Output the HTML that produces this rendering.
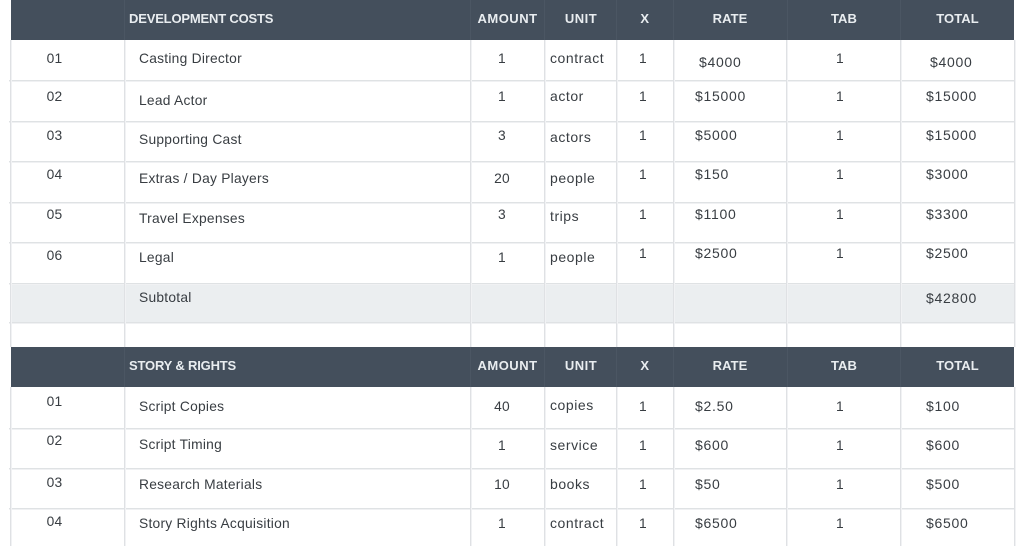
<!DOCTYPE html>
<html>
<head>
<meta charset="utf-8">
<style>
html,body{margin:0;padding:0;background:#fff}
#p{position:relative;width:1024px;height:546px;overflow:hidden;background:#fff;font-family:"Liberation Sans",sans-serif;color:#383d42;font-size:13.8px;letter-spacing:.25px}
#p div{position:absolute}
.b{background:#444f5c}
.s{background:#ebeef0}
.h{left:9px;width:1006px;height:1px;background:#dfe2e4;box-shadow:0 1px 0 #f0f1f3}
.v{width:1px;background:#dfe1e4;box-shadow:1px 0 0 #f1f2f4}
.vd{width:1px;background:#4b5663}
.t{white-space:nowrap;line-height:18px;height:18px;margin-top:2px}
.c{transform:translateX(-50%)}
#p .m{font-size:14px;letter-spacing:.72px;margin-top:0}
#p .u{font-size:14px;letter-spacing:.55px;margin-top:0}
#p .w{color:#e9edf0;font-weight:bold;font-size:13px;letter-spacing:.5px;margin-top:0}
#p .w.g{letter-spacing:-.18px}
#p .w.r{letter-spacing:.1px}
</style>
</head>
<body>
<div id="p">
<div class="s" style="left:11px;top:283px;width:1003px;height:40px"></div>
<div class="b" style="left:11px;top:0;width:1003px;height:40px"></div>
<div class="b" style="left:11px;top:347px;width:1003px;height:40px"></div>

<div class="h" style="top:80px"></div>
<div class="h" style="top:121px"></div>
<div class="h" style="top:161px"></div>
<div class="h" style="top:202px"></div>
<div class="h" style="top:242px"></div>
<div class="h" style="top:283px"></div>
<div class="h" style="top:322px"></div>
<div class="h" style="top:428px"></div>
<div class="h" style="top:468px"></div>
<div class="h" style="top:508px"></div>

<div class="v" style="left:10px;top:40px;height:307px"></div>
<div class="v" style="left:10px;top:387px;height:159px"></div>
<div class="v" style="left:1014px;top:40px;height:307px"></div>
<div class="v" style="left:1014px;top:387px;height:159px"></div>
<div class="v" style="left:124px;top:40px;height:307px"></div>
<div class="v" style="left:124px;top:387px;height:159px"></div>
<div class="v" style="left:470px;top:40px;height:307px"></div>
<div class="v" style="left:470px;top:387px;height:159px"></div>
<div class="v" style="left:544px;top:40px;height:307px"></div>
<div class="v" style="left:544px;top:387px;height:159px"></div>
<div class="v" style="left:616px;top:40px;height:307px"></div>
<div class="v" style="left:616px;top:387px;height:159px"></div>
<div class="v" style="left:673px;top:40px;height:307px"></div>
<div class="v" style="left:673px;top:387px;height:159px"></div>
<div class="v" style="left:786px;top:40px;height:307px"></div>
<div class="v" style="left:786px;top:387px;height:159px"></div>
<div class="v" style="left:900px;top:40px;height:307px"></div>
<div class="v" style="left:900px;top:387px;height:159px"></div>

<div class="vd" style="left:124px;top:0;height:40px"></div>
<div class="vd" style="left:470px;top:0;height:40px"></div>
<div class="vd" style="left:544px;top:0;height:40px"></div>
<div class="vd" style="left:616px;top:0;height:40px"></div>
<div class="vd" style="left:673px;top:0;height:40px"></div>
<div class="vd" style="left:787px;top:0;height:40px"></div>
<div class="vd" style="left:900px;top:0;height:40px"></div>
<div class="vd" style="left:124px;top:347px;height:40px"></div>
<div class="vd" style="left:470px;top:347px;height:40px"></div>
<div class="vd" style="left:544px;top:347px;height:40px"></div>
<div class="vd" style="left:616px;top:347px;height:40px"></div>
<div class="vd" style="left:673px;top:347px;height:40px"></div>
<div class="vd" style="left:787px;top:347px;height:40px"></div>
<div class="vd" style="left:900px;top:347px;height:40px"></div>

<div class="t w g" style="left:129px;top:10px">DEVELOPMENT COSTS</div>
<div class="t w c" style="left:507.5px;top:10px">AMOUNT</div>
<div class="t w c" style="left:581px;top:10px">UNIT</div>
<div class="t w c" style="left:645px;top:10px">X</div>
<div class="t w c r" style="left:730px;top:10px">RATE</div>
<div class="t w c r" style="left:844px;top:10px">TAB</div>
<div class="t w c r" style="left:957.5px;top:10px">TOTAL</div>

<div class="t w g" style="left:129px;top:357px">STORY &amp; RIGHTS</div>
<div class="t w c" style="left:507.5px;top:357px">AMOUNT</div>
<div class="t w c" style="left:581px;top:357px">UNIT</div>
<div class="t w c" style="left:645px;top:357px">X</div>
<div class="t w c r" style="left:730px;top:357px">RATE</div>
<div class="t w c r" style="left:844px;top:357px">TAB</div>
<div class="t w c r" style="left:957.5px;top:357px">TOTAL</div>

<div class="t c" style="left:54.5px;top:48px">01</div>
<div class="t" style="left:139px;top:48px">Casting Director</div>
<div class="t c" style="left:502px;top:48px">1</div>
<div class="t u" style="left:550px;top:49px">contract</div>
<div class="t c" style="left:643px;top:48px">1</div>
<div class="t m" style="left:699px;top:53px">$4000</div>
<div class="t c" style="left:840px;top:48px">1</div>
<div class="t m" style="left:930px;top:53px">$4000</div>

<div class="t c" style="left:54.5px;top:86px">02</div>
<div class="t" style="left:139px;top:90px">Lead Actor</div>
<div class="t c" style="left:502px;top:86px">1</div>
<div class="t u" style="left:550px;top:87px">actor</div>
<div class="t c" style="left:643px;top:86px">1</div>
<div class="t m" style="left:695px;top:87px">$15000</div>
<div class="t c" style="left:840px;top:86px">1</div>
<div class="t m" style="left:926px;top:87px">$15000</div>

<div class="t c" style="left:54.5px;top:125px">03</div>
<div class="t" style="left:139px;top:129px">Supporting Cast</div>
<div class="t c" style="left:502px;top:125px">3</div>
<div class="t u" style="left:550px;top:128px">actors</div>
<div class="t c" style="left:643px;top:125px">1</div>
<div class="t m" style="left:695px;top:126px">$5000</div>
<div class="t c" style="left:840px;top:125px">1</div>
<div class="t m" style="left:926px;top:126px">$15000</div>

<div class="t c" style="left:54.5px;top:164px">04</div>
<div class="t" style="left:139px;top:168px">Extras / Day Players</div>
<div class="t c" style="left:502px;top:168px">20</div>
<div class="t u" style="left:550px;top:169px">people</div>
<div class="t c" style="left:643px;top:164px">1</div>
<div class="t m" style="left:695px;top:165px">$150</div>
<div class="t c" style="left:840px;top:164px">1</div>
<div class="t m" style="left:926px;top:165px">$3000</div>

<div class="t c" style="left:54.5px;top:204px">05</div>
<div class="t" style="left:139px;top:208px">Travel Expenses</div>
<div class="t c" style="left:502px;top:204px">3</div>
<div class="t u" style="left:550px;top:207px">trips</div>
<div class="t c" style="left:643px;top:204px">1</div>
<div class="t m" style="left:695px;top:205px">$1100</div>
<div class="t c" style="left:840px;top:204px">1</div>
<div class="t m" style="left:926px;top:205px">$3300</div>

<div class="t c" style="left:54.5px;top:245px">06</div>
<div class="t" style="left:139px;top:247px">Legal</div>
<div class="t c" style="left:502px;top:247px">1</div>
<div class="t u" style="left:550px;top:248px">people</div>
<div class="t c" style="left:643px;top:243px">1</div>
<div class="t m" style="left:695px;top:244px">$2500</div>
<div class="t c" style="left:840px;top:243px">1</div>
<div class="t m" style="left:926px;top:244px">$2500</div>

<div class="t" style="left:139px;top:287px">Subtotal</div>
<div class="t m" style="left:926px;top:289px">$42800</div>

<div class="t c" style="left:54.5px;top:391px">01</div>
<div class="t" style="left:139px;top:396px">Script Copies</div>
<div class="t c" style="left:502px;top:396px">40</div>
<div class="t u" style="left:550px;top:396px">copies</div>
<div class="t c" style="left:643px;top:396px">1</div>
<div class="t m" style="left:695px;top:397px">$2.50</div>
<div class="t c" style="left:840px;top:396px">1</div>
<div class="t m" style="left:926px;top:397px">$100</div>

<div class="t c" style="left:54.5px;top:430px">02</div>
<div class="t" style="left:139px;top:434px">Script Timing</div>
<div class="t c" style="left:502px;top:435px">1</div>
<div class="t u" style="left:550px;top:436px">service</div>
<div class="t c" style="left:643px;top:435px">1</div>
<div class="t m" style="left:695px;top:436px">$600</div>
<div class="t c" style="left:840px;top:435px">1</div>
<div class="t m" style="left:926px;top:436px">$600</div>

<div class="t c" style="left:54.5px;top:472px">03</div>
<div class="t" style="left:139px;top:474px">Research Materials</div>
<div class="t c" style="left:502px;top:474px">10</div>
<div class="t u" style="left:550px;top:475px">books</div>
<div class="t c" style="left:643px;top:474px">1</div>
<div class="t m" style="left:695px;top:475px">$50</div>
<div class="t c" style="left:840px;top:474px">1</div>
<div class="t m" style="left:926px;top:475px">$500</div>

<div class="t c" style="left:54.5px;top:511px">04</div>
<div class="t" style="left:139px;top:513px">Story Rights Acquisition</div>
<div class="t c" style="left:502px;top:513px">1</div>
<div class="t u" style="left:550px;top:514px">contract</div>
<div class="t c" style="left:643px;top:513px">1</div>
<div class="t m" style="left:695px;top:514px">$6500</div>
<div class="t c" style="left:840px;top:513px">1</div>
<div class="t m" style="left:926px;top:514px">$6500</div>
</div>
</body>
</html>
